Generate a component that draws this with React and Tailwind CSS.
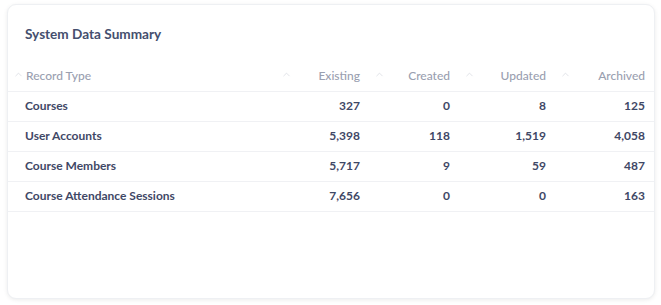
import { ChevronUp } from "lucide-react";

const rows = [
    { name: "Courses", existing: "327", created: "0", updated: "8", archived: "125" },
    { name: "User Accounts", existing: "5,398", created: "118", updated: "1,519", archived: "4,058" },
    { name: "Course Members", existing: "5,717", created: "9", updated: "59", archived: "487" },
    { name: "Course Attendance Sessions", existing: "7,656", created: "0", updated: "0", archived: "163" },
];

function HeaderCell({ label, align = "right", className = "" }) {
    return (
        <th className={`relative h-[30px] pr-[9px] font-medium ${className}`}>
            <ChevronUp
                className="absolute left-[5px] top-[8px] text-[#d3d6dd]"
                size={11}
                strokeWidth={1.5}
            />
            <span className={align === "left" ? "pl-[18px]" : ""}>{label}</span>
        </th>
    );
}

export default function App() {
    return (
        <div
            className="w-[661px] h-[305px] bg-white pt-[4px] pl-[7px]"
            style={{ fontFamily: "Lato, 'Open Sans', sans-serif" }}
        >
            <div className="w-[648px] h-[295px] rounded-[9px] bg-white border border-[#eef0f3] shadow-[0_1px_4px_rgba(0,0,0,0.08)] overflow-hidden">
                {/* Title */}
                <div className="px-[17px] pt-[19px] pb-[17px]">
                    <h2 className="text-[13.6px] font-bold text-[#454f6e] leading-[20px]">
                        System Data Summary
                    </h2>
                </div>

                {/* Table */}
                <table className="w-full border-collapse text-[12px]">
                    <thead>
                        <tr className="text-[#9aa0b0] border-b border-[#f0f1f4]">
                            <HeaderCell label="Record Type" align="left" className="text-left w-[268px]" />
                            <HeaderCell label="Existing" className="text-right w-[93px]" />
                            <HeaderCell label="Created" className="text-right w-[90px]" />
                            <HeaderCell label="Updated" className="text-right w-[96px]" />
                            <HeaderCell label="Archived" className="text-right" />
                        </tr>
                    </thead>
                    <tbody>
                        {rows.map(r => (
                            <tr key={r.name} className="h-[30px] border-b border-[#f0f1f4] text-[#3f4866] font-bold">
                                <td className="pl-[17px]">{r.name}</td>
                                <td className="text-right pr-[9px]">{r.existing}</td>
                                <td className="text-right pr-[9px]">{r.created}</td>
                                <td className="text-right pr-[9px]">{r.updated}</td>
                                <td className="text-right pr-[9px]">{r.archived}</td>
                            </tr>
                        ))}
                    </tbody>
                </table>
            </div>
        </div>
    );
}
